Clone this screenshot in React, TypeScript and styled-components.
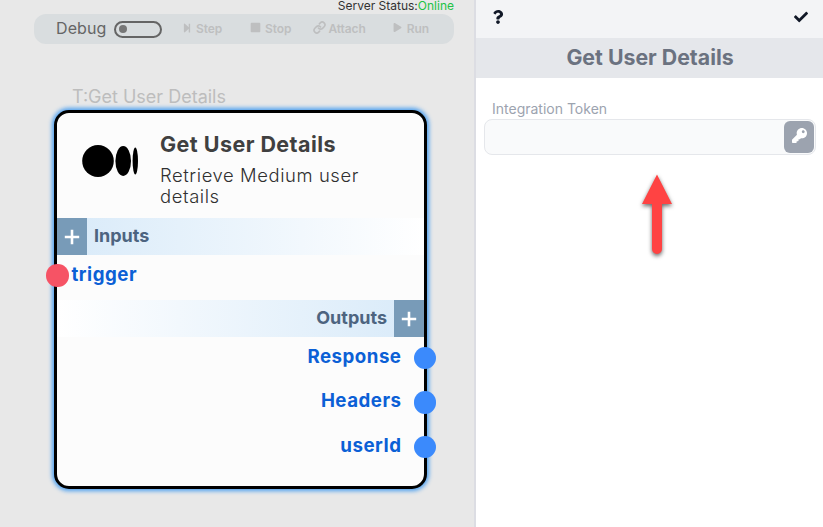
import React from "react";
import styled, { createGlobalStyle } from "styled-components";
import { FaStepForward, FaStop, FaPlay, FaQuestion, FaCheck, FaKey } from "react-icons/fa";
import { FiLink } from "react-icons/fi";

const GlobalStyle = createGlobalStyle`
  * { box-sizing: border-box; }
  body { margin: 0; overflow: hidden; font-family: Inter, "Liberation Sans", sans-serif; }
`;

const Page = styled.div`
  display: flex;
  width: 823px;
  height: 527px;
`;

const Canvas = styled.main`
  width: 474px;
  height: 100%;
  background: #e8e8e8;
`;

const ServerStatus = styled.div`
  height: 14px;
  padding-right: 20px;
  text-align: right;
  font-size: 12px;
  line-height: 12px;
  color: #333;
  white-space: nowrap;
`;

const Online = styled.span`
  color: #22c245;
`;

const Toolbar = styled.div`
  display: flex;
  align-items: center;
  width: 420px;
  height: 30px;
  margin-left: 34px;
  padding-left: 22px;
  border-radius: 12px;
  background: #d9dddf;
`;

const DebugLabel = styled.span`
  width: 58px;
  padding-bottom: 2px;
  font-size: 16px;
  letter-spacing: 0.1px;
  color: #656565;
`;

const Toggle = styled.span`
  display: flex;
  align-items: center;
  width: 48px;
  height: 17px;
  padding-left: 3px;
  border: 2px solid #656565;
  border-radius: 9px;
`;

const Knob = styled.span`
  width: 8px;
  height: 8px;
  border-radius: 50%;
  background: #777;
`;

const ToolButton = styled.span<{ $gap: number; $before: number }>`
  display: flex;
  align-items: center;
  gap: ${(p) => p.$gap}px;
  margin-left: ${(p) => p.$before}px;
  padding-bottom: 1px;
  font-size: 12px;
  font-weight: 600;
  letter-spacing: -0.1px;
  color: #bebfc0;
  white-space: nowrap;
  svg { flex: none; margin-bottom: 2px; }
`;

const NodeLabel = styled.div`
  margin: 42px 0 0 72px;
  height: 24px;
  font-size: 18px;
  line-height: 22px;
  color: #bdbdbd;
  white-space: nowrap;
`;

const NodeCard = styled.section`
  width: 373px;
  height: 379px;
  margin-left: 54px;
  border: 3px solid #000;
  border-radius: 15px;
  background: #fcfcfc;
  box-shadow: 0 0 4px 2px #4da0f0;
`;

const NodeHeader = styled.header`
  display: flex;
  height: 105px;
  padding: 18px 20px 0 24px;
`;

const MediumLogo = styled.svg`
  flex: none;
  width: 58px;
  height: 34px;
  margin: 13px 21px 0 0;
`;

const NodeTitle = styled.h2`
  margin: 0;
  font-size: 21.5px;
  line-height: 26px;
  font-weight: 700;
  letter-spacing: 0.45px;
  color: #404040;
  white-space: nowrap;
`;

const NodeText = styled.p`
  width: 225px;
  margin: 8px 0 0;
  font-size: 18.4px;
  line-height: 21px;
  font-weight: 300;
  letter-spacing: 0.6px;
  color: #303030;
`;

const Band = styled.div<{ $end?: boolean }>`
  display: flex;
  flex-direction: ${(p) => (p.$end ? "row-reverse" : "row")};
  gap: 7px;
  height: 37px;
  font-size: 18px;
  line-height: 36px;
  font-weight: 700;
  color: #4d6480;
  background: linear-gradient(${(p) => (p.$end ? "to left" : "to right")}, #d8eaf9, #fff);
`;

const AddBox = styled.span`
  display: flex;
  align-items: center;
  justify-content: center;
  width: 30px;
  height: 37px;
  padding-top: 1px;
  background: #789bb8;
`;

const Port = styled.div<{ $end?: boolean; $height: number }>`
  display: flex;
  flex-direction: ${(p) => (p.$end ? "row-reverse" : "row")};
  align-items: center;
  height: ${(p) => p.$height}px;
  gap: ${(p) => (p.$end ? 12 : 3)}px;
  margin: ${(p) => (p.$end ? "0 -12px 0 0" : "0 0 0 -11px")};
  font-size: 18.7px;
  line-height: 22px;
  font-weight: 700;
  letter-spacing: 0.5px;
  color: #0b60d6;
`;

const InputPorts = styled.div`
  height: 45px;
`;

const OutputPorts = styled.div`
  margin-top: -1.5px;
`;

const PortText = styled.span`
  padding-bottom: 2px;
`;

const Dot = styled.span<{ $color: string }>`
  width: 22.5px;
  height: 22.5px;
  border-radius: 50%;
  background: ${(p) => p.$color};
`;

const Panel = styled.aside`
  width: 349px;
  height: 100%;
  border-left: 2px solid #dcdde3;
  background: #fff;
`;

const PanelBar = styled.div`
  display: flex;
  justify-content: space-between;
  height: 38px;
  padding: 10px 15px 0 15px;
  background: #f3f4f6;
  color: #111827;
`;

const PanelTitle = styled.h1`
  height: 40px;
  margin: 0;
  padding-left: 1px;
  font-size: 21.3px;
  line-height: 39px;
  font-weight: 700;
  text-align: center;
  color: #6b7280;
  background: #e5e7eb;
`;

const FieldLabel = styled.label`
  display: block;
  height: 41px;
  padding: 22px 0 0 16px;
  font-size: 14px;
  line-height: 18px;
  color: #9ca3af;
`;

const Field = styled.div`
  display: flex;
  justify-content: flex-end;
  width: 332px;
  height: 36px;
  margin-left: 8px;
  padding: 1px;
  border: 1px solid #e5e7eb;
  border-radius: 8px;
  background: #f9fafb;
`;

const KeyButton = styled.button`
  display: flex;
  justify-content: center;
  width: 30px;
  height: 32px;
  padding: 7px 0 0;
  border: 0;
  border-radius: 6px;
  background: #9ca3af;
  color: #fff;
`;

const Arrow = styled.svg`
  display: block;
  width: 50px;
  height: 100px;
  margin: 13px 0 0 156px;
`;

const ArrowShape = styled.path`
  fill: #ff4343;
  filter: drop-shadow(0 2px 2px rgba(0, 0, 0, 0.6));
`;

const Plus = () => (
  <svg width="16" height="16" viewBox="0 0 16 16">
    <path d="M8 .8v14.4M.8 8h14.4" stroke="#fff" strokeWidth="2.6" />
  </svg>
);

const outputs = ["Response", "Headers", "userId"];

export default function App() {
  return (
    <Page>
      <GlobalStyle />
      <Canvas>
        <ServerStatus>Server Status:<Online>Online</Online></ServerStatus>
        <Toolbar>
          <DebugLabel>Debug</DebugLabel>
          <Toggle><Knob /></Toggle>
          <ToolButton $gap={4} $before={20}><FaStepForward size={10} />Step</ToolButton>
          <ToolButton $gap={4} $before={28}><FaStop size={11} />Stop</ToolButton>
          <ToolButton $gap={2} $before={22}><FiLink size={13} strokeWidth={3} />Attach</ToolButton>
          <ToolButton $gap={5} $before={27}><FaPlay size={9} />Run</ToolButton>
        </Toolbar>
        <NodeLabel>T:Get User Details</NodeLabel>
        <NodeCard>
          <NodeHeader>
            <MediumLogo viewBox="0 0 58 34">
              <ellipse cx="17" cy="17" rx="15.8" ry="16" />
              <ellipse cx="42.2" cy="17" rx="7.8" ry="15" />
              <ellipse cx="54.3" cy="17" rx="2.7" ry="13.5" />
            </MediumLogo>
            <div>
              <NodeTitle>Get User Details</NodeTitle>
              <NodeText>Retrieve Medium user details</NodeText>
            </div>
          </NodeHeader>
          <Band><AddBox><Plus /></AddBox>Inputs</Band>
          <InputPorts>
            <Port $height={41}><Dot $color="#f65365" /><PortText>trigger</PortText></Port>
          </InputPorts>
          <Band $end><AddBox><Plus /></AddBox>Outputs</Band>
          <OutputPorts>
            {outputs.map((name) => (
              <Port key={name} $end $height={44.5}><Dot $color="#3b8afc" /><PortText>{name}</PortText></Port>
            ))}
          </OutputPorts>
        </NodeCard>
      </Canvas>
      <Panel>
        <PanelBar><FaQuestion size={14} /><FaCheck size={14} /></PanelBar>
        <PanelTitle>Get User Details</PanelTitle>
        <FieldLabel>Integration Token</FieldLabel>
        <Field><KeyButton aria-label="Select key"><FaKey size={15} /></KeyButton></Field>
        <Arrow viewBox="0 0 50 100">
          <ArrowShape d="M25 6.5 40 36H30V81a5 5 0 0 1-10 0V36H10Z" />
        </Arrow>
      </Panel>
    </Page>
  );
}
